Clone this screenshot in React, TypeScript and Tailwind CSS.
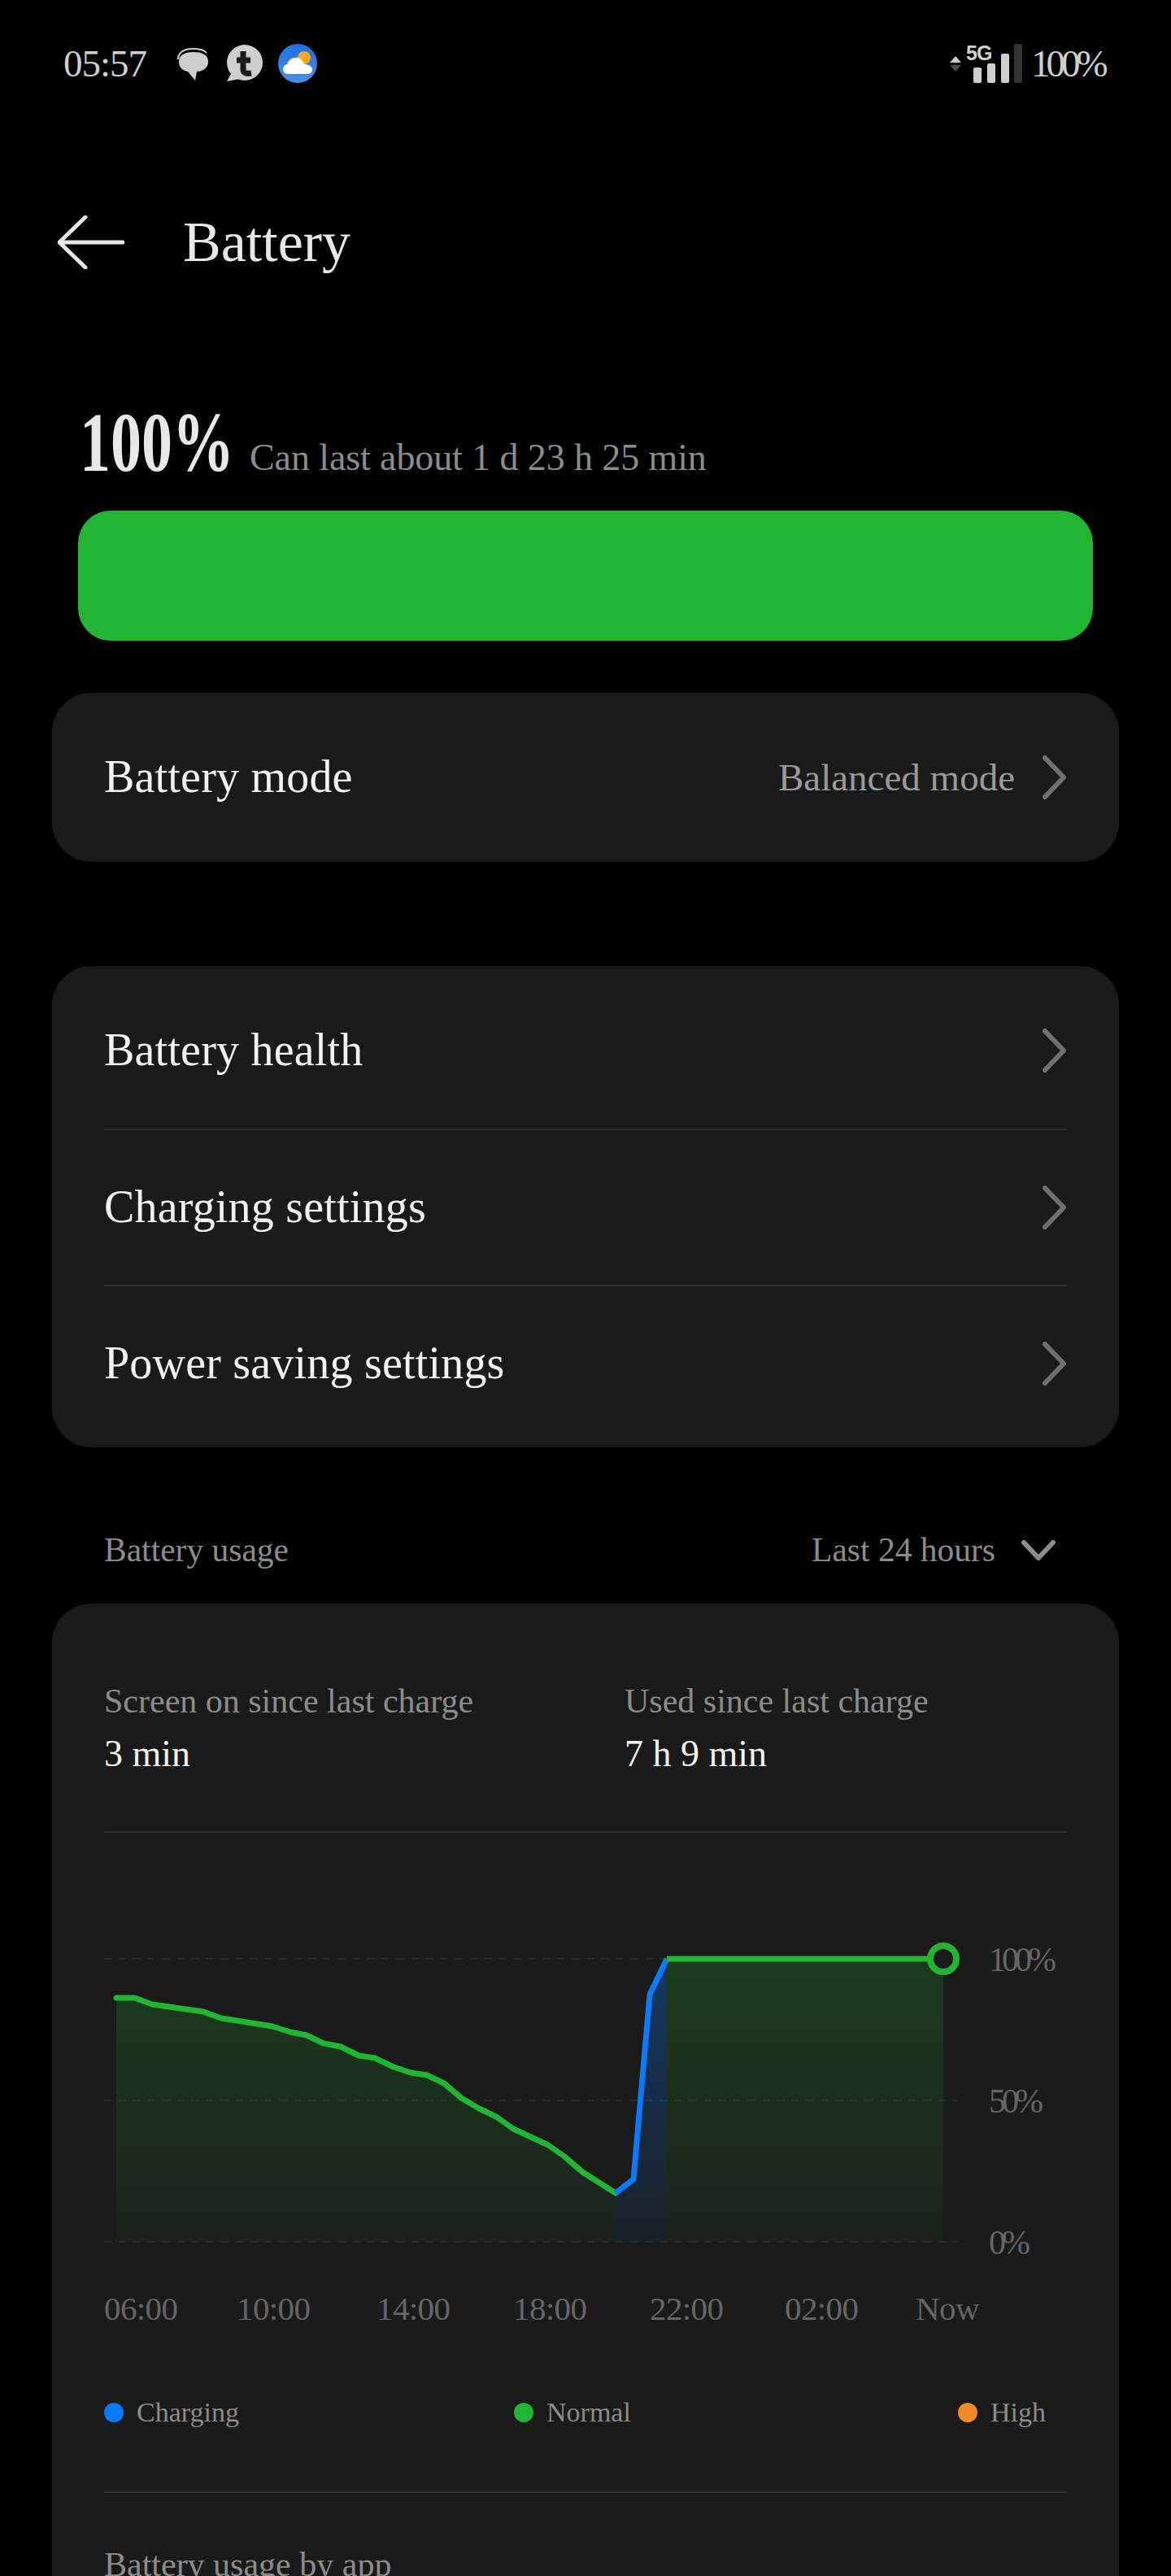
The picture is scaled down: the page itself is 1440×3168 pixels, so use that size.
const fontStyle = "font-['Liberation_Serif',serif]";

const green = [
  [143, 2457], [166, 2457], [187, 2465], [250, 2474], [272, 2482], [335, 2492], [357, 2499], [377, 2503],
  [398, 2513], [419, 2517], [441, 2528], [461, 2531], [484, 2542], [505, 2549], [525, 2552], [546, 2562],
  [567, 2580], [589, 2593], [610, 2603], [631, 2618], [674, 2638], [694, 2652], [716, 2671], [757, 2697],
];
const blue = [[757, 2697], [779, 2680], [799, 2453], [820, 2409]];
const pts = (a: number[][]) => a.map((p) => p.join(",")).join(" ");

function Chevron() {
  return (
    <svg width="30" height="54" viewBox="0 0 30 54" fill="none" className="shrink-0">
      <path d="M3 3 L26 27 L3 51" stroke="#707070" strokeWidth="6" strokeLinecap="round" strokeLinejoin="round" />
    </svg>
  );
}

function Row({ label, first }: { label: string; first?: boolean }) {
  return (
    <div className={`flex h-[192px] items-center justify-between ${first ? "" : "border-t-2 border-[#333333]"}`}>
      <span className="pb-[2px] text-[56px] leading-none tracking-[0.2px] text-[#f2f2f2]">{label}</span>
      <Chevron />
    </div>
  );
}

function StatusIcons() {
  return (
    <div className="flex items-center gap-[19px]">
      <svg width="40" height="46" viewBox="0 0 40 46">
        <path d="M1 18 C1 9 9 5 19 5 C27 5 33 6 36 10" fill="none" stroke="#cfcfcf" strokeWidth="2" />
        <path d="M2 21 C2 12 10 9 20 9 C30 9 38 12 38 21 C38 29 31 33 24 33 L22 44 L13 33 C7 32 2 28 2 21 Z" fill="#cfcfcf" />
      </svg>
      <svg width="46" height="46" viewBox="0 0 46 46">
        <circle cx="24" cy="22" r="22" fill="#cfcfcf" />
        <path d="M8 34 L2 45 L18 42 Z" fill="#cfcfcf" />
        <path d="M22 8 L22 30 C22 35 26 36 32 35 M14 19 L31 19" fill="none" stroke="#1a1a1a" strokeWidth="7" />
      </svg>
      <svg width="48" height="48" viewBox="0 0 48 48">
        <defs>
          <linearGradient id="wx" x1="0" y1="0" x2="0" y2="1">
            <stop offset="0" stopColor="#1f6fe0" />
            <stop offset="1" stopColor="#4b8fe8" />
          </linearGradient>
        </defs>
        <circle cx="24" cy="24" r="24" fill="url(#wx)" />
        <circle cx="32" cy="17" r="8" fill="#f6a821" />
        <path d="M10 30 C10 22 14 17 22 17 L26 30 Z" fill="#a9c6ef" />
        <path d="M12 37 C8 37 6 34 6 31 C6 28 8 25 12 25 C14 19 19 16 24 17 C28 18 31 21 32 25 C37 25 42 27 42 32 C42 35 39 37 36 37 Z" fill="#ffffff" />
      </svg>
    </div>
  );
}

function StatusRight() {
  return (
    <div className="flex items-center">
      <div className="flex flex-col gap-[3px]">
        <svg width="14" height="8" viewBox="0 0 14 8"><path d="M7 0 L14 8 L0 8 Z" fill="#c8c8c8" /></svg>
        <svg width="14" height="8" viewBox="0 0 14 8"><path d="M7 8 L14 0 L0 0 Z" fill="#4a4a4a" /></svg>
      </div>
      <div className="relative ml-[6px] h-[48px] w-[70px]">
        <span className="absolute left-0 top-[-1px] font-['Liberation_Sans',sans-serif] text-[25px] font-bold leading-[24px] tracking-[-1px] text-[#cfcfcf]">5G</span>
        <svg width="70" height="48" viewBox="0 0 70 48" className="absolute inset-0">
          <rect x="9" y="29" width="10" height="19" rx="2" fill="#cfcfcf" />
          <rect x="26" y="24" width="10" height="24" rx="2" fill="#cfcfcf" />
          <rect x="43" y="12" width="10" height="36" rx="2" fill="#cfcfcf" />
          <rect x="59" y="0" width="10" height="48" rx="2" fill="#333333" />
        </svg>
      </div>
      <span className="ml-[10px] w-[90px] whitespace-nowrap text-[47px] leading-none tracking-[-5px] text-[#cfcfcf]">100%</span>
    </div>
  );
}

function Chart() {
  return (
    <svg width="1184" height="490" viewBox="128 2300 1184 490" className="block">
      <defs>
        <linearGradient id="gf" x1="0" y1="2409" x2="0" y2="2757" gradientUnits="userSpaceOnUse">
          <stop offset="0" stopColor="#22b433" stopOpacity="0.22" />
          <stop offset="1" stopColor="#22b433" stopOpacity="0.05" />
        </linearGradient>
        <linearGradient id="bf" x1="0" y1="2409" x2="0" y2="2757" gradientUnits="userSpaceOnUse">
          <stop offset="0" stopColor="#0a7aff" stopOpacity="0.32" />
          <stop offset="1" stopColor="#0a7aff" stopOpacity="0.06" />
        </linearGradient>
      </defs>
      {[2409, 2583, 2757].map((y) => (
        <line key={y} x1="127" x2="1177" y1={y} y2={y} stroke="#292929" strokeWidth="2" strokeDasharray="10 8" />
      ))}
      <polygon points={`143,2757 ${pts(green)} 757,2757`} fill="url(#gf)" />
      <polygon points={`757,2757 ${pts(blue)} 820,2757`} fill="url(#bf)" />
      <rect x="820" y="2409" width="340" height="348" fill="url(#gf)" />
      <polyline points={pts(green)} fill="none" stroke="#22b433" strokeWidth="7" strokeLinejoin="round" strokeLinecap="round" />
      <polyline points={pts(blue)} fill="none" stroke="#0a7aff" strokeWidth="7" strokeLinejoin="round" />
      <line x1="820" x2="1145" y1="2409" y2="2409" stroke="#22b433" strokeWidth="7" />
      <circle cx="1160" cy="2409" r="16" fill="#1a1a1a" stroke="#22b433" strokeWidth="8" />
      <g className="fill-[#666666] text-[42px] tracking-[-5px]">
        <text x="1216" y="2424">100%</text>
        <text x="1216" y="2598">50%</text>
        <text x="1216" y="2772">0%</text>
      </g>
    </svg>
  );
}

const axis: [string, string][] = [
  ["06:00", "w-[163px]"], ["10:00", "w-[172px]"], ["14:00", "w-[168px]"], ["18:00", "w-[168px]"],
  ["22:00", "w-[166px]"], ["02:00", "w-[161px]"], ["Now", "w-[70px]"],
];

function Legend({ color, label, width }: { color: string; label: string; width: string }) {
  return (
    <div className={`flex items-center gap-[16px] ${width}`}>
      <span className={`h-[24px] w-[24px] shrink-0 rounded-full ${color}`} />
      <span className="whitespace-nowrap text-[34px] leading-none text-[#8c8c8c]">{label}</span>
    </div>
  );
}

export default function App() {
  return (
    <div className={`${fontStyle} h-[3168px] w-[1440px] overflow-hidden bg-black`}>
      <div className="flex h-[156px] items-center justify-between pl-[78px] pr-[82px]">
        <div className="flex items-center gap-[38px]">
          <span className="text-[47px] leading-none tracking-[-1px] text-[#cfcfcf]">05:57</span>
          <StatusIcons />
        </div>
        <StatusRight />
      </div>

      <div className="flex h-[284px] items-center pl-[71px]">
        <svg width="82" height="66" viewBox="0 0 82 66" fill="none">
          <path d="M34 2 L2 33 L34 64 M2 33 L80 33" stroke="#e8e8e8" strokeWidth="5" strokeLinecap="round" strokeLinejoin="round" />
        </svg>
        <span className="ml-[72px] text-[70px] leading-none text-[#e8e8e8]">Battery</span>
      </div>

      <div className="flex h-[188px] items-end pb-[42px] pl-[98px]">
        <span className="inline-block w-[184px] origin-bottom-left scale-x-[0.73] whitespace-nowrap text-[104px] font-bold leading-[84px] text-[#e8e8e8]">100%</span>
        <span className="ml-[25px] text-[46px] leading-none tracking-[-0.1px] text-[#8c8c8c]">Can last about 1 d 23 h 25 min</span>
      </div>

      <div className="mx-[96px] h-[160px] rounded-[40px] bg-[#22b433]" />

      <div className="mx-[64px] mt-[64px] flex h-[208px] items-center justify-between rounded-[48px] bg-[#1a1a1a] px-[64px]">
        <span className="pb-[2px] text-[56px] leading-none tracking-[0.2px] text-[#f2f2f2]">Battery mode</span>
        <div className="flex items-center gap-[34px]">
          <span className="text-[47px] leading-none text-[#9a9a9a]">Balanced mode</span>
          <Chevron />
        </div>
      </div>

      <div className="mx-[64px] mt-[128px] rounded-[48px] bg-[#1a1a1a] px-[64px] py-[8px]">
        <Row label="Battery health" first />
        <Row label="Charging settings" />
        <Row label="Power saving settings" />
      </div>

      <div className="flex h-[192px] items-center justify-between pl-[128px] pr-[142px] pt-[62px]">
        <span className="text-[41.5px] leading-none text-[#8c8c8c]">Battery usage</span>
        <div className="flex items-center gap-[32px]">
          <span className="text-[41.5px] leading-none text-[#8c8c8c]">Last 24 hours</span>
          <svg width="42" height="26" viewBox="0 0 42 26" fill="none">
            <path d="M3 3 L21 22 L39 3" stroke="#8c8c8c" strokeWidth="6" strokeLinecap="round" strokeLinejoin="round" />
          </svg>
        </div>
      </div>

      <div className="mx-[64px] h-[1300px] rounded-[48px] bg-[#1a1a1a] px-[64px]">
        <div className="flex h-[282px] items-start border-b-2 border-[#333333] pt-[96px]">
          <div className="w-[640px]">
            <div className="text-[42px] leading-[48px] text-[#8c8c8c]">Screen on since last charge</div>
            <div className="mt-[16px] text-[46px] leading-[50px] text-[#f2f2f2]">3 min</div>
          </div>
          <div>
            <div className="text-[42px] leading-[48px] text-[#8c8c8c]">Used since last charge</div>
            <div className="mt-[16px] text-[46px] leading-[50px] text-[#f2f2f2]">7 h 9 min</div>
          </div>
        </div>
        <div className="mt-[46px]">
          <Chart />
        </div>
        <div className="mt-[28px] flex text-[41px] leading-[42px] tracking-[-0.6px] text-[#666666]">
          {axis.map(([t, w]) => (
            <span key={t} className={`shrink-0 ${w}`}>{t}</span>
          ))}
        </div>
        <div className="mt-[90px] flex">
          <Legend color="bg-[#0a7aff]" label="Charging" width="w-[504px]" />
          <Legend color="bg-[#22b433]" label="Normal" width="w-[546px]" />
          <Legend color="bg-[#f08a24]" label="High" width="w-[110px]" />
        </div>
        <div className="mt-[80px] border-t-2 border-[#333333] pt-[64px] text-[42px] leading-[48px] text-[#8c8c8c]">
          Battery usage by app
        </div>
      </div>
    </div>
  );
}
